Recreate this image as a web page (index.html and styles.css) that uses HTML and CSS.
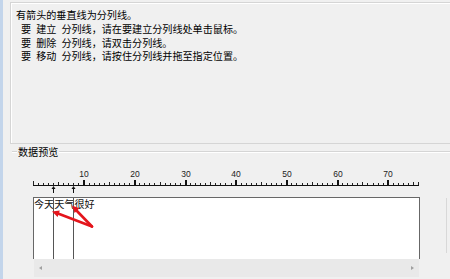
FILE: index.html
```html
<!DOCTYPE html>
<html lang="zh-CN">
<head>
<meta charset="utf-8">
<title>文本分列向导</title>
<link rel="stylesheet" href="styles.css">
</head>
<body>
<div class="window">
  <div class="frame"></div>
  <div class="main">
    <div class="info">
      <p class="line">有箭头的垂直线为分列线。</p>
      <p class="line sub">要 建立 分列线，请在要建立分列线处单击鼠标。</p>
      <p class="line sub">要 删除 分列线，请双击分列线。</p>
      <p class="line sub">要 移动 分列线，请按住分列线并拖至指定位置。</p>
    </div>
    <section class="preview">
      <div class="preview-head"><span class="rule lead"></span><span class="legend">数据预览</span><span class="rule tail"></span></div>
      <svg class="ruler" width="400" height="38" viewBox="0 0 400 38">
        <g class="nums" font-family="Liberation Sans, sans-serif" font-size="8.5" text-anchor="middle" fill="#222">
          <text x="54" y="18">10</text>
          <text x="105" y="18">20</text>
          <text x="156" y="18">30</text>
          <text x="206" y="18">40</text>
          <text x="257" y="18">50</text>
          <text x="308" y="18">60</text>
          <text x="358" y="18">70</text>
        </g>
        <path d="M3 26.5H389" stroke="#111" stroke-width="1"/>
        <path stroke="#222" stroke-width="1" fill="none" d="M3.5 26v-4 M8.5 26v-2 M13.5 26v-2 M18.5 26v-2 M23.5 26v-2 M28.5 26v-3 M33.5 26v-2 M38.5 26v-2 M43.5 26v-2 M48.5 26v-2 M59.5 26v-2 M64.5 26v-2 M69.5 26v-2 M74.5 26v-2 M79.5 26v-3 M84.5 26v-2 M89.5 26v-2 M94.5 26v-2 M99.5 26v-2 M109.5 26v-2 M114.5 26v-2 M119.5 26v-2 M124.5 26v-2 M130.5 26v-3 M135.5 26v-2 M140.5 26v-2 M145.5 26v-2 M150.5 26v-2 M160.5 26v-2 M165.5 26v-2 M170.5 26v-2 M175.5 26v-2 M180.5 26v-3 M185.5 26v-2 M190.5 26v-2 M195.5 26v-2 M201.5 26v-2 M211.5 26v-2 M216.5 26v-2 M221.5 26v-2 M226.5 26v-2 M231.5 26v-3 M236.5 26v-2 M241.5 26v-2 M246.5 26v-2 M251.5 26v-2 M261.5 26v-2 M266.5 26v-2 M272.5 26v-2 M277.5 26v-2 M282.5 26v-3 M287.5 26v-2 M292.5 26v-2 M297.5 26v-2 M302.5 26v-2 M312.5 26v-2 M317.5 26v-2 M322.5 26v-2 M327.5 26v-2 M332.5 26v-3 M337.5 26v-2 M343.5 26v-2 M348.5 26v-2 M353.5 26v-2 M363.5 26v-2 M368.5 26v-2 M373.5 26v-2 M378.5 26v-2 M383.5 26v-3 M388.5 26v-3"/>
        <g fill="#111">
          <rect x="53" y="21" width="2" height="5"/>
          <rect x="104" y="21" width="2" height="5"/>
          <rect x="155" y="21" width="2" height="5"/>
          <rect x="205" y="21" width="2" height="5"/>
          <rect x="256" y="21" width="2" height="5"/>
          <rect x="307" y="21" width="2" height="5"/>
          <rect x="357" y="21" width="2" height="5"/>
        </g>
        <g fill="#111" stroke="#111">
          <path d="M23.5 29v5" stroke-width="1"/>
          <polygon points="21.5,30 25.5,30 23.5,27" stroke="none"/>
          <path d="M43.5 29v5" stroke-width="1"/>
          <polygon points="41.5,30 45.5,30 43.5,27" stroke="none"/>
        </g>
      </svg>
      <div class="preview-row">
        <div class="grid-box">
          <div class="grid-area">
            <div class="grid-text">今天天气很好</div>
            <div class="split" style="left:19px"></div>
            <div class="split" style="left:39px"></div>
          </div>
          <div class="hscroll"><span class="arr arr-l"></span><span class="arr arr-r"></span></div>
        </div>
        <div class="vscroll"></div>
      </div>
    </section>
  </div>
  <svg class="annot" width="450" height="279" viewBox="0 0 450 279">
    <g stroke="#e4151c" stroke-width="2.6" stroke-linecap="round" fill="none">
      <path d="M92 226.5L58 213.5"/>
      <path d="M92 226.5L75.5 209.5"/>
    </g>
    <g fill="#e4151c">
      <polygon points="52,211.5 59.8,210.6 57.6,217"/>
      <polygon points="72,205.5 79.4,208.2 74.6,213"/>
    </g>
  </svg>
</div>
</body>
</html>
```

FILE: styles.css
```css
* {
  box-sizing: border-box;
}

body {
  margin: 0;
  background: #f0f0f0;
  font-family: "Noto Sans CJK SC", "Liberation Sans", sans-serif;
  color: #000;
}

.window {
  position: relative;
  display: flex;
  width: 450px;
  height: 279px;
  overflow: hidden;
  background: #f0f0f0;
}

.frame {
  flex: none;
  width: 3px;
  background: #c3d5eb;
}

.main {
  flex: 1;
  min-width: 0;
  display: flex;
  flex-direction: column;
  padding: 2px 0 0 7px;
}

.info {
  flex: none;
  height: 142px;
  border: 1px solid #d5d5d5;
  border-right: none;
  box-shadow: inset 1px 1px 0 #fff;
  padding: 5px 0 0 5px;
}

.line {
  margin: 0;
  font-size: 10.1px;
  line-height: 13.8px;
  white-space: nowrap;
  color: #000;
}

.sub {
  padding-left: 5px;
  word-spacing: 2.8px;
}

.preview {
  flex: 1;
  display: flex;
  flex-direction: column;
}

.preview-head {
  flex: none;
  display: flex;
  align-items: center;
  height: 15px;
  margin-left: 2px;
}

.rule {
  height: 2px;
  border-top: 1px solid #d5d5d5;
  border-bottom: 1px solid #fff;
}

.lead {
  width: 5px;
}

.tail {
  flex: 1;
}

.legend {
  font-size: 10.1px;
  line-height: 14px;
  padding: 0 1px;
  white-space: nowrap;
}

.ruler {
  display: block;
  flex: none;
  margin-left: 20px;
}

.preview-row {
  display: flex;
  align-items: flex-start;
}

.grid-box {
  flex: none;
  width: 387px;
  margin-left: 23px;
}

.grid-area {
  position: relative;
  height: 62px;
  background: #fff;
  border: 1px solid #676767;
  border-bottom: none;
}

.grid-text {
  font-size: 10.14px;
  line-height: 12px;
  white-space: nowrap;
  color: #111;
}

.split {
  position: absolute;
  top: 0;
  bottom: 0;
  width: 1px;
  background: #555;
}

.hscroll {
  height: 18px;
  margin: 0 1px;
  background: #e9e9e9;
  display: flex;
  align-items: center;
  justify-content: space-between;
  padding: 0 5px;
}

.arr {
  width: 0;
  height: 0;
  border-top: 2.5px solid transparent;
  border-bottom: 2.5px solid transparent;
}

.arr-l {
  border-right: 3px solid #a0a0a0;
}

.arr-r {
  border-left: 3px solid #a0a0a0;
}

.vscroll {
  flex: none;
  width: 1px;
  height: 55px;
  margin: 1px 0 0 26px;
  background: #d8d8d8;
}

.annot {
  position: absolute;
  left: 0;
  top: 0;
  pointer-events: none;
}
```
